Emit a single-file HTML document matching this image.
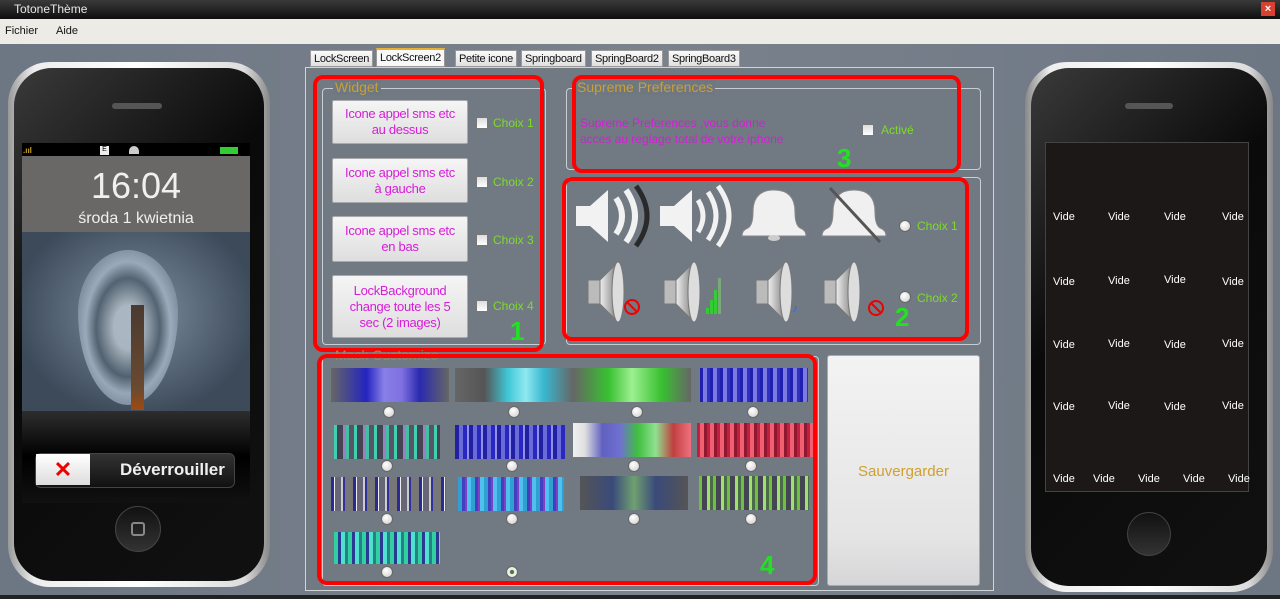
<!DOCTYPE html>
<html><head><meta charset="utf-8"><style>
*{margin:0;padding:0;box-sizing:border-box}
body{width:1280px;height:599px;overflow:hidden;font-family:"Liberation Sans",sans-serif;background:#6f7781;position:relative}
.a{position:absolute}
.title{left:0;top:0;width:1280px;height:19px;background:linear-gradient(#3a3a3a,#0e0e0e);color:#e8e8e8;font-size:12px;padding:2px 0 0 14px}
.menu{left:0;top:19px;width:1280px;height:25px;background:#ecebe6;font-size:11px;color:#111}
.main{left:0;top:44px;width:1280px;height:551px;background:linear-gradient(90deg,#6d7784,#7a828c 50%,#6d7784)}
.tab{top:50px;height:17px;background:linear-gradient(#fafafa,#e0e0e0);border:1px solid #999;font-size:11px;padding:2px 3px 0;color:#111;white-space:nowrap;letter-spacing:-0.3px}
.grp{border:1px solid #c9ced4;border-radius:4px}
.gt{font-size:14px;color:#c9a035;background:#6f7781;padding:0 2px}
.red{border:4px solid #f00;border-radius:10px}
.btn{left:332px;width:136px;background:linear-gradient(#f5f5f5,#dedede);border:1px solid #aaa;border-radius:2px;color:#d81cd8;font-size:13px;text-align:center;display:flex;align-items:center;justify-content:center;line-height:16px;letter-spacing:-0.3px}
.cb{width:12px;height:12px;background:linear-gradient(#ddd,#fff);border:1px solid #777}
.ch{font-size:12px;color:#7ddc2a}
.num{font-size:26px;font-weight:bold;color:#22e022}
.st{height:34px;width:118px}
.rd{width:12px;height:12px;border-radius:50%;background:radial-gradient(circle at 40% 35%,#fff,#ccc);border:1px solid #666}
.vide{color:#fff;font-size:11px}
</style></head><body>
<div class="a title">TotoneThème</div>
<div class="a" style="left:1261px;top:2px;width:14px;height:14px;background:#d84030;color:#fff;font-size:11px;text-align:center;line-height:14px;font-weight:bold">×</div>
<div class="a menu"><span class="a" style="left:5px;top:6px">Fichier</span><span class="a" style="left:56px;top:6px">Aide</span></div>
<div class="a main"></div>
<div class="a" style="left:0;top:595px;width:1280px;height:4px;background:#222"></div>

<!-- left phone -->
<div class="a" style="left:8px;top:62px;width:262px;height:525px;border-radius:42px;background:linear-gradient(90deg,#999,#eee 10%,#fff 50%,#ddd 90%,#888)"></div>
<div class="a" style="left:14px;top:68px;width:250px;height:513px;border-radius:38px;background:linear-gradient(135deg,#3a3a3a,#0a0a0a 40%,#111)"></div>
<div class="a" style="left:112px;top:103px;width:50px;height:6px;border-radius:3px;background:#555"></div>
<div class="a" style="left:22px;top:143px;width:228px;height:13px;background:#000"></div>
<div class="a" style="left:23px;top:146px;font-size:8px;color:#c9a020;font-weight:bold">.ııl</div>
<div class="a" style="left:100px;top:146px;width:9px;height:9px;background:#eee;font-size:7px;text-align:center;color:#000">E</div>
<div class="a" style="left:129px;top:146px;width:10px;height:8px;border-radius:5px 5px 0 0;background:#ccc"></div>
<div class="a" style="left:220px;top:147px;width:18px;height:7px;background:#3c3"></div>
<div class="a" style="left:22px;top:156px;width:228px;height:76px;background:#6a6867"></div>
<div class="a" style="left:22px;top:165px;width:228px;text-align:center;color:#f0f0f0;font-size:36px">16:04</div>
<div class="a" style="left:22px;top:210px;width:228px;text-align:center;color:#f0f0f0;font-size:16px">środa 1 kwietnia</div>
<div class="a" style="left:22px;top:232px;width:228px;height:179px;background:radial-gradient(ellipse at 50% 45%,#8090a0,#3c4a5a 75%)"></div>
<div class="a" style="left:78px;top:250px;width:100px;height:155px;border-radius:50% 50% 50% 50%/40% 40% 60% 60%;background:radial-gradient(ellipse,#b0bcc6 20%,#50606e 45%,#a0b0c0 60%,#4a5a6a);opacity:.9"></div>
<div class="a" style="left:131px;top:305px;width:13px;height:105px;background:linear-gradient(#4a3a30,#6a4a30 80%,#a04a10)"></div>
<div class="a" style="left:22px;top:411px;width:228px;height:92px;background:linear-gradient(#2e2e2e,#000 50%,#111)"></div>
<div class="a" style="left:35px;top:453px;width:200px;height:35px;border-radius:6px;background:linear-gradient(#333,#111);border:1px solid #444"></div>
<div class="a" style="left:36px;top:454px;width:54px;height:31px;background:linear-gradient(#fff,#ddd);color:#e00;font-size:22px;text-align:center;line-height:31px;font-weight:bold">✕</div>
<div class="a" style="left:120px;top:460px;color:#f0f0f0;font-size:17px;font-weight:bold">Déverrouiller</div>
<div class="a" style="left:115px;top:506px;width:46px;height:46px;border-radius:50%;background:linear-gradient(#111,#333);border:1px solid #444"></div>
<div class="a" style="left:131px;top:522px;width:14px;height:14px;border:2px solid #888;border-radius:3px"></div>

<!-- right phone -->
<div class="a" style="left:1025px;top:62px;width:248px;height:530px;border-radius:42px;background:linear-gradient(90deg,#888,#eee 10%,#fff 50%,#ddd 90%,#888)"></div>
<div class="a" style="left:1031px;top:68px;width:236px;height:518px;border-radius:38px;background:linear-gradient(135deg,#3a3a3a,#0a0a0a 40%,#111)"></div>
<div class="a" style="left:1125px;top:103px;width:48px;height:6px;border-radius:3px;background:#555"></div>
<div class="a" style="left:1045px;top:142px;width:204px;height:350px;background:#1c1818;border:1px solid #444"></div>
<div class="a vide" style="left:1053px;top:211px">Vide</div><div class="a vide" style="left:1108px;top:211px">Vide</div><div class="a vide" style="left:1164px;top:211px">Vide</div><div class="a vide" style="left:1222px;top:211px">Vide</div>
<div class="a vide" style="left:1053px;top:276px">Vide</div><div class="a vide" style="left:1108px;top:275px">Vide</div><div class="a vide" style="left:1164px;top:274px">Vide</div><div class="a vide" style="left:1222px;top:276px">Vide</div>
<div class="a vide" style="left:1053px;top:339px">Vide</div><div class="a vide" style="left:1108px;top:338px">Vide</div><div class="a vide" style="left:1164px;top:339px">Vide</div><div class="a vide" style="left:1222px;top:338px">Vide</div>
<div class="a vide" style="left:1053px;top:401px">Vide</div><div class="a vide" style="left:1108px;top:400px">Vide</div><div class="a vide" style="left:1164px;top:401px">Vide</div><div class="a vide" style="left:1222px;top:400px">Vide</div>
<div class="a vide" style="left:1053px;top:473px">Vide</div><div class="a vide" style="left:1093px;top:473px">Vide</div><div class="a vide" style="left:1138px;top:473px">Vide</div><div class="a vide" style="left:1183px;top:473px">Vide</div><div class="a vide" style="left:1228px;top:473px">Vide</div>
<div class="a" style="left:1127px;top:512px;width:44px;height:44px;border-radius:50%;background:linear-gradient(#111,#333);border:1px solid #444"></div>

<!-- tabs & panel -->
<div class="a" style="left:305px;top:67px;width:689px;height:524px;border:1px solid #d0d4d8;background:#717983"></div>
<div class="a tab" style="left:310px">LockScreen</div>
<div class="a tab" style="left:376px;top:48px;height:19px;background:#f8f8f8;border-top:2px solid #e6b030">LockScreen2</div>
<div class="a tab" style="left:455px">Petite icone</div>
<div class="a tab" style="left:521px">Springboard</div>
<div class="a tab" style="left:591px">SpringBoard2</div>
<div class="a tab" style="left:668px">SpringBoard3</div>

<!-- widget -->
<div class="a grp" style="left:322px;top:88px;width:224px;height:257px"></div>
<div class="a gt" style="left:333px;top:79px">Widget</div>
<div class="a btn" style="top:100px;height:44px">Icone appel sms etc<br>au dessus</div>
<div class="a btn" style="top:158px;height:45px">Icone appel sms etc<br>à gauche</div>
<div class="a btn" style="top:216px;height:46px">Icone appel sms etc<br>en bas</div>
<div class="a btn" style="top:275px;height:63px">LockBackground<br>change toute les 5<br>sec (2 images)</div>
<div class="a cb" style="left:476px;top:117px"></div><div class="a ch" style="left:493px;top:116px">Choix 1</div>
<div class="a cb" style="left:476px;top:176px"></div><div class="a ch" style="left:493px;top:175px">Choix 2</div>
<div class="a cb" style="left:476px;top:234px"></div><div class="a ch" style="left:493px;top:233px">Choix 3</div>
<div class="a cb" style="left:476px;top:300px"></div><div class="a ch" style="left:493px;top:299px">Choix 4</div>
<div class="a red" style="left:313px;top:75px;width:231px;height:277px"></div>
<div class="a num" style="left:510px;top:316px">1</div>

<!-- supreme -->
<div class="a grp" style="left:566px;top:88px;width:415px;height:82px"></div>
<div class="a gt" style="left:575px;top:79px">Supreme Preferences</div>
<div class="a" style="left:580px;top:115px;color:#d81cd8;font-size:12px;line-height:16px">Supreme Preferences ,vous donne<br>acces au reglage total de votre iphone</div>
<div class="a cb" style="left:862px;top:124px"></div><div class="a ch" style="left:881px;top:123px">Activé</div>
<div class="a red" style="left:572px;top:75px;width:389px;height:98px"></div>
<div class="a num" style="left:837px;top:143px">3</div>

<!-- volume -->
<div class="a grp" style="left:566px;top:177px;width:415px;height:168px"></div>
<svg class="a" style="left:570px;top:182px" width="330" height="145" viewBox="0 0 330 145">
<defs><linearGradient id="cone" x1="0" x2="1"><stop offset="0" stop-color="#eee"/><stop offset=".6" stop-color="#aaa"/><stop offset="1" stop-color="#666"/></linearGradient></defs>
<g fill="#f2f2f2"><path d="M6 24h14l18-16v52L20 44H6z"/><path d="M90 24h14l18-16v52l-18-16H90z"/></g>
<g fill="none" stroke="#f2f2f2" stroke-width="6"><path d="M46 16q12 18 0 36M56 8q18 26 0 52"/></g>
<g fill="none" stroke="#2a2a2a" stroke-width="5"><path d="M66 4q22 30 0 60"/></g>
<g fill="none" stroke="#f2f2f2" stroke-width="5"><path d="M128 18q10 16 0 32M138 10q16 24 0 48M148 4q22 30 0 60"/></g>
<path d="M172 54q0-6 6-8q5-3 5-16q0-22 21-22q21 0 21 22q0 13 5 16q6 2 6 8z" fill="#f0f0f0" stroke="#888"/>
<ellipse cx="204" cy="56" rx="6" ry="3" fill="#ccc"/>
<path d="M252 54q0-6 6-8q5-3 5-16q0-22 21-22q21 0 21 22q0 13 5 16q6 2 6 8z" fill="#f0f0f0" stroke="#888"/>
<path d="M260 6l50 54" stroke="#555" stroke-width="3"/>
<g stroke="#777">
<rect x="18" y="98" width="12" height="24" fill="#bbb"/><path d="M30 98l18-18v60l-18-18z" fill="url(#cone)"/><ellipse cx="48" cy="110" rx="6" ry="30" fill="#ddd"/>
<rect x="94" y="98" width="12" height="24" fill="#bbb"/><path d="M106 98l18-18v60l-18-18z" fill="url(#cone)"/><ellipse cx="124" cy="110" rx="6" ry="30" fill="#ddd"/>
<rect x="186" y="98" width="12" height="24" fill="#bbb"/><path d="M198 98l18-18v60l-18-18z" fill="url(#cone)"/><ellipse cx="216" cy="110" rx="6" ry="30" fill="#ddd"/>
<rect x="254" y="98" width="12" height="24" fill="#bbb"/><path d="M266 98l18-18v60l-18-18z" fill="url(#cone)"/><ellipse cx="284" cy="110" rx="6" ry="30" fill="#ddd"/>
</g>
<g fill="none" stroke="#e00" stroke-width="2"><circle cx="62" cy="125" r="7"/><path d="M57 120l10 10"/><circle cx="306" cy="126" r="7"/><path d="M301 121l10 10"/></g>
<g fill="#3c3"><rect x="136" y="126" width="3" height="6"/><rect x="140" y="118" width="3" height="14"/><rect x="144" y="108" width="3" height="24"/><rect x="148" y="96" width="3" height="36" fill="#7a7"/></g>
<text x="222" y="130" fill="#36f" font-size="12">♪</text>
</svg>
<div class="a rd" style="left:899px;top:220px"></div><div class="a ch" style="left:917px;top:219px">Choix 1</div>
<div class="a rd" style="left:899px;top:291px"></div><div class="a ch" style="left:917px;top:291px">Choix 2</div>
<div class="a red" style="left:562px;top:177px;width:407px;height:164px"></div>
<div class="a num" style="left:895px;top:302px">2</div>

<!-- mask -->
<div class="a grp" style="left:322px;top:356px;width:497px;height:230px"></div>
<div class="a gt" style="left:333px;top:347px;color:#9a8a5a;background:transparent">Mask Customize</div>
<div class="a st" style="left:331px;top:368px;background:linear-gradient(90deg,#666,#2424c0 30%,#8880e8 45%,#8070e0 60%,#2a2ab0 75%,#666)"></div>
<div class="a st" style="left:455px;top:368px;background:linear-gradient(90deg,#666,#555 25%,#40c8d8 45%,#90e8f0 60%,#38b8d0 75%,#666)"></div>
<div class="a st" style="left:573px;top:368px;background:linear-gradient(90deg,#666,#38c030 30%,#9cf090 50%,#38c030 75%,#666)"></div>
<div class="a st" style="left:700px;top:368px;width:108px;background:repeating-linear-gradient(90deg,#2020b0 0 3px,#7a7ae0 3px 7px,#3030c0 7px 10px)"></div>
<div class="a st" style="left:334px;top:425px;width:106px;background:repeating-linear-gradient(90deg,#40d0b0 0 3px,#445 3px 9px,#9a80c0 9px 12px,#40c0a0 12px 15px,#556 15px 20px)"></div>
<div class="a st" style="left:455px;top:425px;width:110px;background:repeating-linear-gradient(90deg,#2020a0 0 4px,#6a6ad8 4px 8px,#2828c0 8px 12px,#9090e8 12px 14px)"></div>
<div class="a st" style="left:573px;top:423px;background:linear-gradient(90deg,#f0f0f0,#e0e0e0 10%,#6060c0 25%,#7070d0 40%,#40c040 55%,#90e090 70%,#c04040 85%,#f07080)"></div>
<div class="a st" style="left:697px;top:423px;background:repeating-linear-gradient(90deg,#c02040 0 3px,#f06070 3px 7px,#901830 7px 10px)"></div>
<div class="a st" style="left:331px;top:477px;width:115px;background:repeating-linear-gradient(90deg,#2a2a90 0 3px,#eee 3px 4px,#667 4px 10px,#ccc 10px 12px,#3030a0 12px 14px,#777 14px 22px)"></div>
<div class="a st" style="left:458px;top:477px;width:106px;background:repeating-linear-gradient(90deg,#30a0d0 0 4px,#4040c0 4px 7px,#8040c0 7px 9px,#50c0f0 9px 13px)"></div>
<div class="a st" style="left:580px;top:476px;width:108px;background:linear-gradient(90deg,#555,#3a4a7a 30%,#70a070 50%,#3a4a7a 70%,#555)"></div>
<div class="a st" style="left:699px;top:476px;width:110px;background:repeating-linear-gradient(90deg,#70c040 0 3px,#445 3px 8px,#a0e070 8px 11px,#4a6a4a 11px 14px)"></div>
<div class="a st" style="left:334px;top:532px;width:106px;height:32px;background:repeating-linear-gradient(90deg,#30d0a0 0 4px,#2a3a90 4px 7px,#50e0d0 7px 11px,#2a8080 11px 14px)"></div>
<div class="a rd" style="left:383px;top:406px"></div><div class="a rd" style="left:508px;top:406px"></div><div class="a rd" style="left:631px;top:406px"></div><div class="a rd" style="left:747px;top:406px"></div>
<div class="a rd" style="left:381px;top:460px"></div><div class="a rd" style="left:506px;top:460px"></div><div class="a rd" style="left:628px;top:460px"></div><div class="a rd" style="left:745px;top:460px"></div>
<div class="a rd" style="left:381px;top:513px"></div><div class="a rd" style="left:506px;top:513px"></div><div class="a rd" style="left:628px;top:513px"></div><div class="a rd" style="left:745px;top:513px"></div>
<div class="a rd" style="left:381px;top:566px"></div><div class="a rd" style="left:506px;top:566px;background:radial-gradient(circle,#4a7a30 25%,#eee 35%)"></div>
<div class="a red" style="left:317px;top:354px;width:500px;height:231px"></div>
<div class="a num" style="left:760px;top:550px">4</div>

<div class="a" style="left:827px;top:355px;width:153px;height:231px;border:1px solid #aaa;border-radius:3px;background:linear-gradient(#f3f3f3,#e4e4e4 80%,#d6d6d8);color:#d0a030;font-size:15px;text-align:center;line-height:231px">Sauvergarder</div>
</body></html>
